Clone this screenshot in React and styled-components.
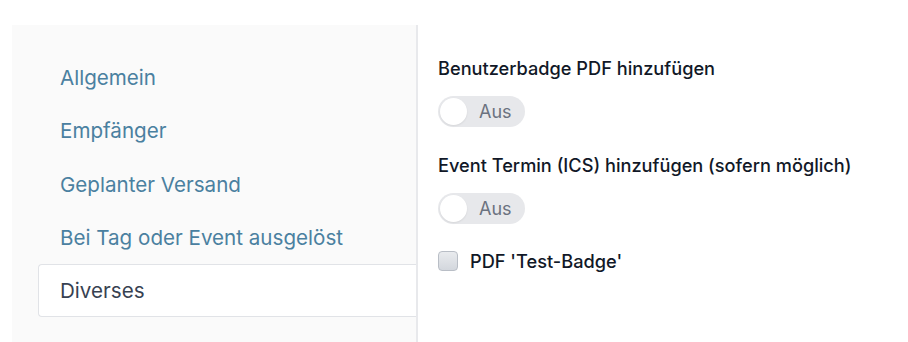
import { useState } from 'react'
import styled, { createGlobalStyle } from 'styled-components'

const GlobalStyle = createGlobalStyle`
    html, body {
        margin: 0;
        padding: 0;
        background: #ffffff;
    }

    body {
        font-family: Inter, "Noto Sans", "Liberation Sans", sans-serif;
        -webkit-font-smoothing: antialiased;
    }
`

const Page = styled.div`
    display: flex;
    height: 342px;
    padding: 25px 0 0 12px;
    box-sizing: border-box;
    overflow: hidden;
`

const Sidebar = styled.nav`
    display: flex;
    flex-direction: column;
    width: 406px;
    flex-shrink: 0;
    padding: 26px 0 0 26px;
    box-sizing: border-box;
    background: #fafafa;
    border-right: 2px solid #e8e9ec;
`

const NavItem = styled.a`
    display: flex;
    align-items: center;
    height: 53.3px;
    padding: 0 0 0 21px;
    box-sizing: border-box;
    border: 1px solid ${ ( { $active } ) => $active ? `#e1e3e7` : `transparent` };
    border-right: none;
    border-radius: 4px 0 0 4px;
    background: ${ ( { $active } ) => $active ? `#ffffff` : `transparent` };
    color: ${ ( { $active } ) => $active ? `#374151` : `#4a80a0` };
    font-size: 20.6px;
    text-decoration: none;
    cursor: pointer;
`

const Content = styled.section`
    display: flex;
    flex-direction: column;
    align-items: flex-start;
    padding: 30px 0 0 20px;
`

const Label = styled.div`
    color: #111827;
    font-size: 18.2px;
    font-weight: 500;
    line-height: 26px;
    margin-bottom: 15px;
`

const Toggle = styled.button`
    display: flex;
    align-items: center;
    gap: 12px;
    width: 87px;
    height: 31px;
    padding: 0 0 0 2px;
    border: none;
    border-radius: 999px;
    background: #e7e8eb;
    color: #6b7280;
    font-family: inherit;
    font-size: 18px;
    margin-bottom: 25px;
    cursor: pointer;
`

const Knob = styled.span`
    width: 27px;
    height: 27px;
    border-radius: 50%;
    background: #ffffff;
    box-shadow: 0 1px 2px rgba(0, 0, 0, 0.08);
`

const CheckRow = styled.label`
    display: flex;
    align-items: center;
    gap: 12px;
    margin-top: 1px;
    color: #111827;
    font-size: 18.2px;
    font-weight: 500;
    cursor: pointer;
`

const Box = styled.span`
    width: 18px;
    height: 18px;
    border: 1px solid #b9bec6;
    border-radius: 4px;
    background: linear-gradient(#e9ebee, #d3d7dd);
`

const items = [ `Allgemein`, `Empfänger`, `Geplanter Versand`, `Bei Tag oder Event ausgelöst`, `Diverses` ]

export default function App() {

    const [ active, set_active ] = useState( `Diverses` )

    return <Page>
        <GlobalStyle />
        <Sidebar>
            { items.map( item => <NavItem key={ item } $active={ item === active } onClick={ () => set_active( item ) }>
                { item }
            </NavItem> ) }
        </Sidebar>
        <Content>
            <Label>Benutzerbadge PDF hinzufügen</Label>
            <Toggle><Knob />Aus</Toggle>
            <Label>Event Termin (ICS) hinzufügen (sofern möglich)</Label>
            <Toggle><Knob />Aus</Toggle>
            <CheckRow><Box />PDF 'Test-Badge'</CheckRow>
        </Content>
    </Page>
}
